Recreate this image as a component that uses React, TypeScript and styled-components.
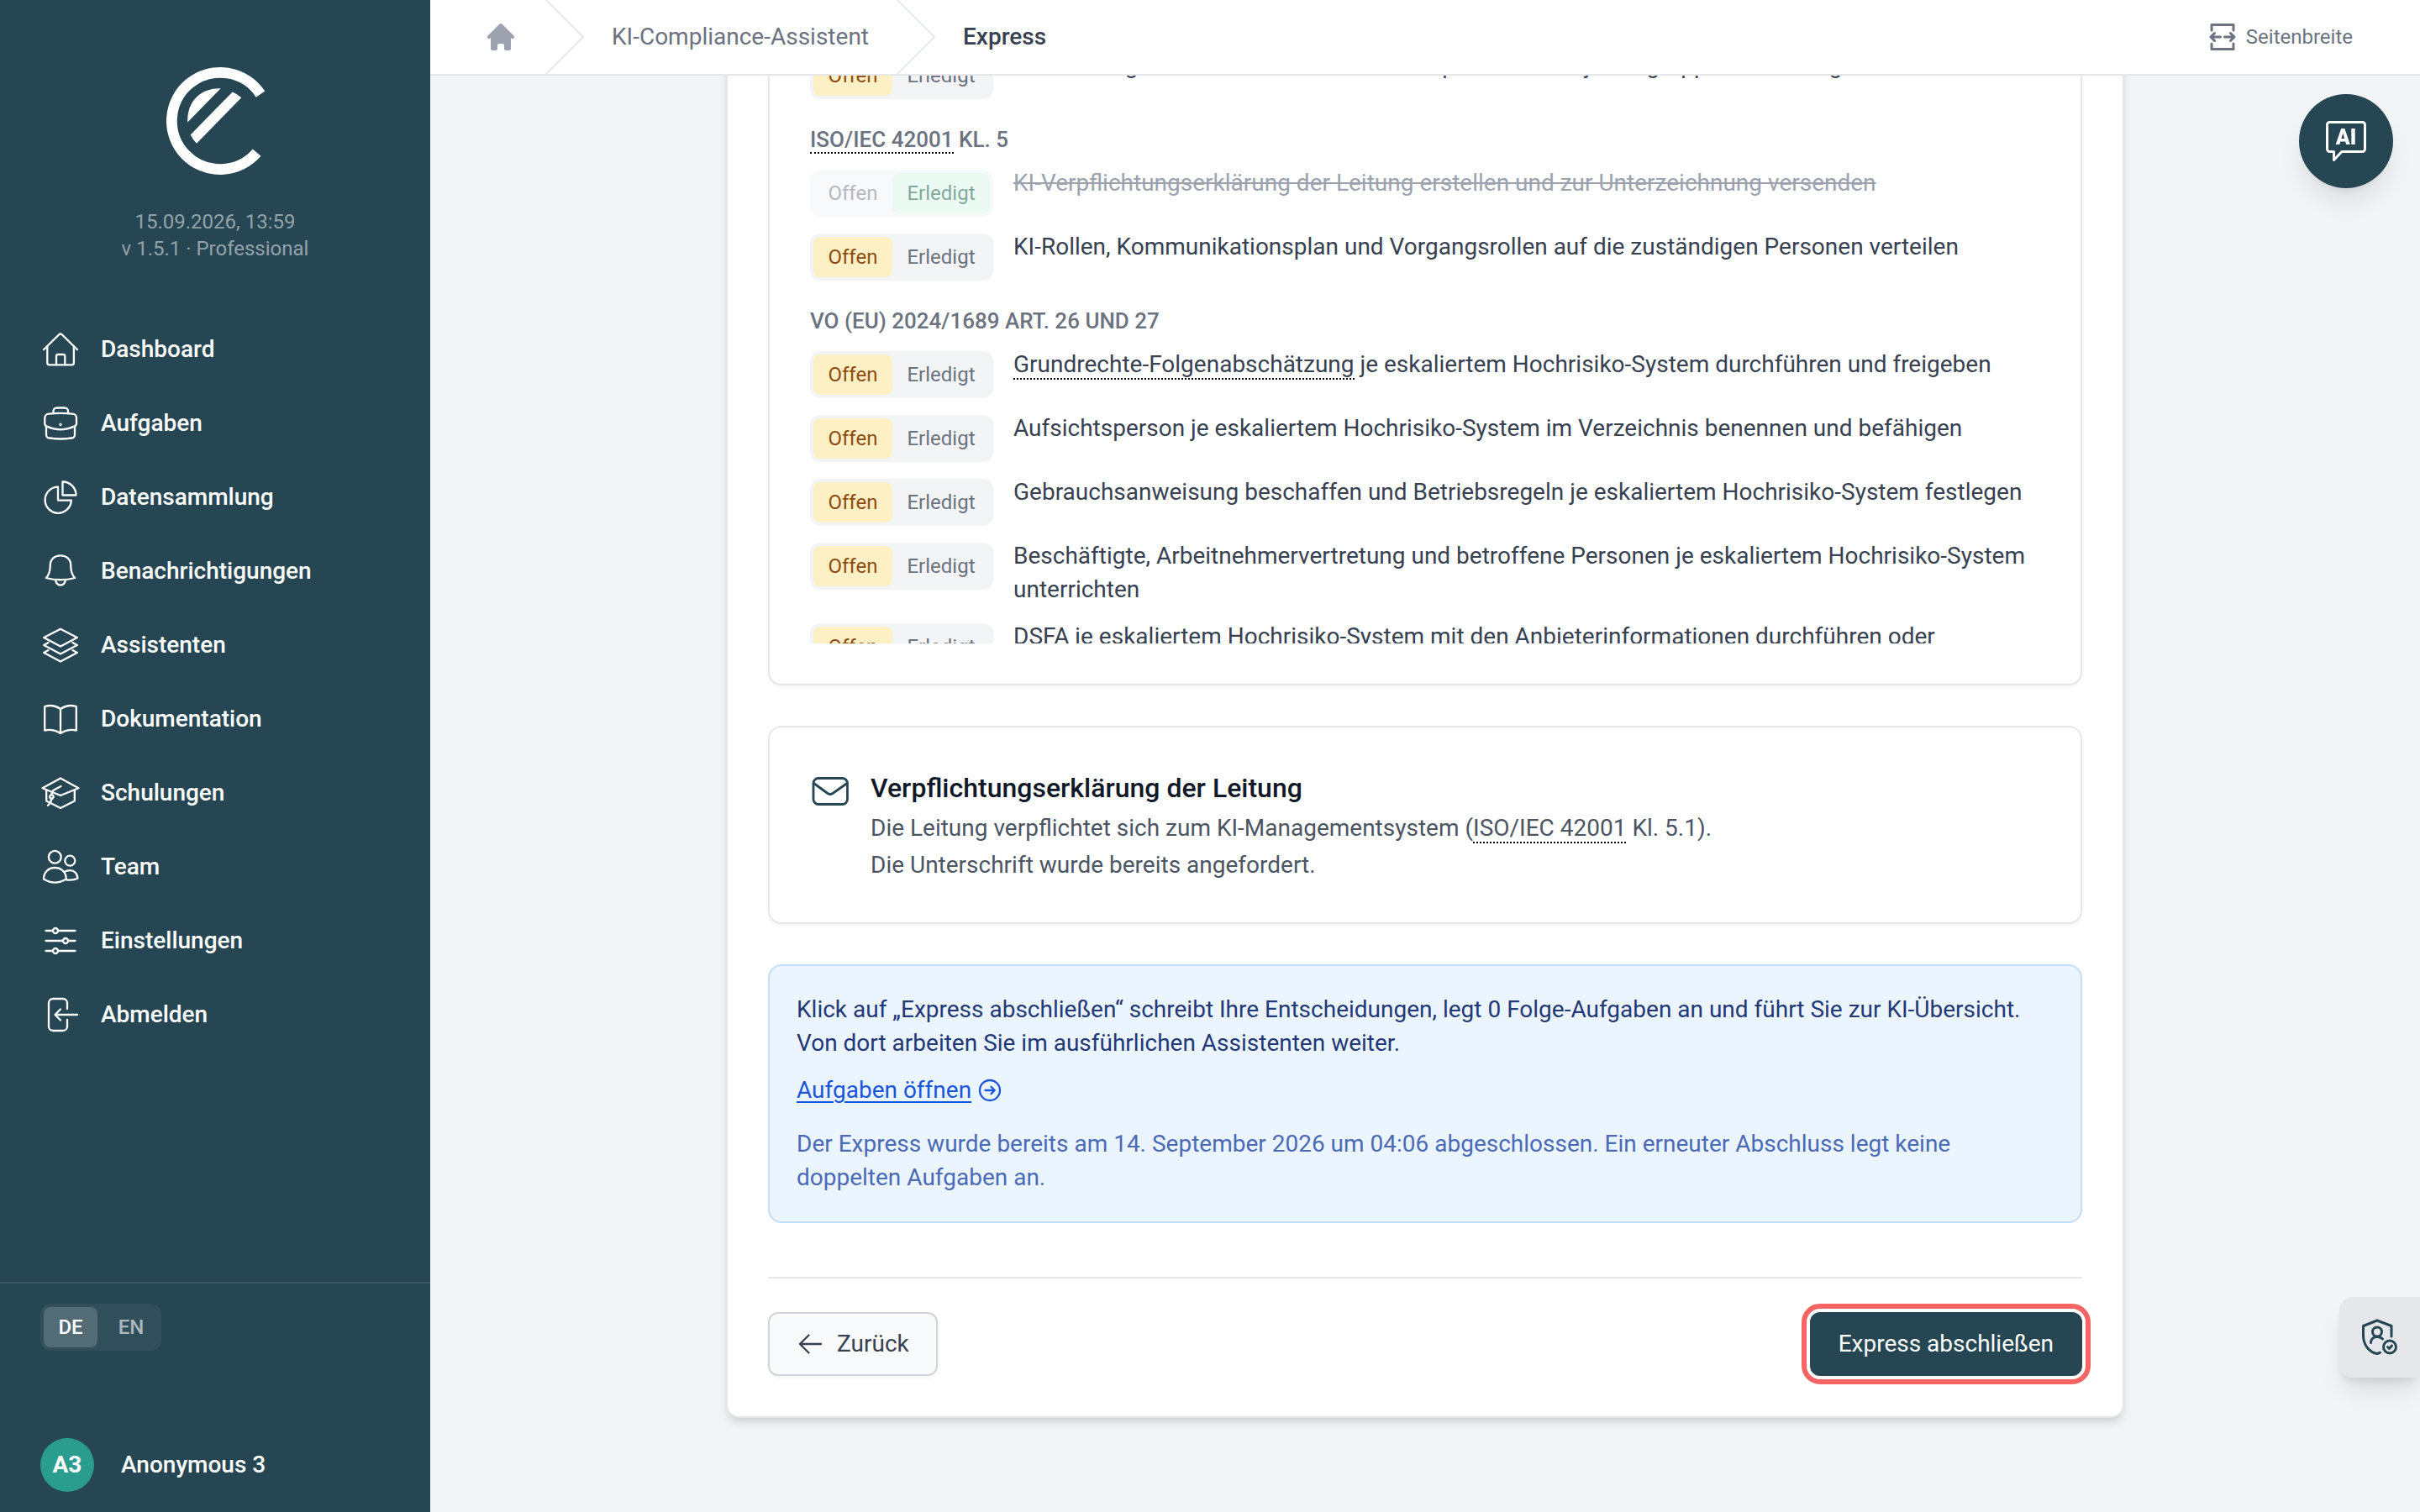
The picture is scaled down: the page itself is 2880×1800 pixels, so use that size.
import React from "react";
import styled, { createGlobalStyle, css } from "styled-components";

const color = {
  brand: "#264653",
  accent: "#2a9d8f",
  page: "#f3f4f6",
  line: "#e5e7eb",
  muted: "#6b7280",
  text: "#374151",
};

const GlobalStyle = createGlobalStyle`
  *, *::before, *::after { box-sizing: border-box; }
  body {
    margin: 0;
    font-family: Roboto, "Noto Sans", sans-serif;
    font-size: 28px;
    line-height: 40px;
    color: ${color.text};
    background: ${color.page};
  }
  h1, h2, h3, p, ul { margin: 0; padding: 0; }
  ul { list-style: none; }
  button { font: inherit; color: inherit; cursor: pointer; border: 0; background: none; padding: 0; }
  a { color: inherit; text-decoration: none; }
  svg { display: block; flex: none; }
`;

const Shell = styled.div`
  display: grid;
  grid-template-columns: 512px minmax(0, 1fr);
  height: 100vh;
  overflow: hidden;
`;

/* ---------- Sidebar ---------- */

const Sidebar = styled.aside`
  display: flex;
  flex-direction: column;
  background: ${color.brand};
  color: #fff;
`;

const Brand = styled.div`
  display: flex;
  flex-direction: column;
  align-items: center;
  padding: 72px 0 60px;
  gap: 32px;
`;

const Meta = styled.p`
  font-size: 24px;
  line-height: 32px;
  text-align: center;
  color: rgba(255, 255, 255, 0.5);
`;

const NavList = styled.ul`
  display: flex;
  flex-direction: column;
`;

const NavLink = styled.a`
  display: flex;
  align-items: center;
  gap: 24px;
  height: 88px;
  padding: 0 48px;
  font-weight: 500;
`;

const SidebarFooter = styled.div`
  display: flex;
  flex-direction: column;
  gap: 104px;
  align-items: flex-start;
  margin-top: auto;
  padding: 24px 48px;
  border-top: 2px solid rgba(255, 255, 255, 0.1);
`;

const Languages = styled.div`
  display: flex;
  padding: 4px;
  gap: 8px;
  border-radius: 12px;
  background: rgba(255, 255, 255, 0.05);
`;

const LanguageButton = styled.button<{ $active?: boolean }>`
  min-width: 64px;
  height: 48px;
  padding: 0 16px;
  border-radius: 8px;
  font-size: 24px;
  font-weight: 500;
  line-height: 32px;
  color: ${(p) => (p.$active ? "#fff" : "rgba(255, 255, 255, 0.6)")};
  background: ${(p) => (p.$active ? "rgba(255, 255, 255, 0.16)" : "transparent")};
`;

const Profile = styled.a`
  display: flex;
  align-items: center;
  gap: 32px;
  font-weight: 500;
`;

const Avatar = styled.span`
  display: grid;
  place-items: center;
  width: 64px;
  height: 64px;
  border-radius: 50%;
  background: ${color.accent};
  font-weight: 700;
`;

/* ---------- Header ---------- */

const Column = styled.div`
  display: flex;
  flex-direction: column;
  min-width: 0;
  min-height: 0;
`;

const Header = styled.header`
  display: flex;
  justify-content: space-between;
  align-items: center;
  height: 90px;
  flex: none;
  padding: 0 80px 0 64px;
  background: #fff;
  border-bottom: 2px solid ${color.line};
`;

const Crumbs = styled.nav`
  display: flex;
  align-items: center;
  gap: 32px;
  color: ${color.muted};
`;

const Current = styled.span`
  font-weight: 500;
  color: ${color.text};
`;

const WidthButton = styled.button`
  display: flex;
  align-items: center;
  gap: 8px;
  font-size: 24px;
  line-height: 32px;
  color: ${color.muted};
`;

/* ---------- Content ---------- */

const Viewport = styled.main`
  display: flex;
  flex-direction: column;
  justify-content: flex-end;
  align-items: center;
  flex: 1;
  min-height: 0;
  overflow: hidden;
  padding: 0 48px 112px;
`;

const Sheet = styled.div`
  display: flex;
  flex-direction: column;
  flex: none;
  gap: 48px;
  width: 100%;
  max-width: 1664px;
  padding: 48px;
  background: #fff;
  border: 2px solid ${color.line};
  border-radius: 16px;
  box-shadow: 0 8px 12px -2px rgba(0, 0, 0, 0.1), 0 4px 8px -4px rgba(0, 0, 0, 0.1);
`;

const Card = styled.section`
  padding: 48px;
  background: #fff;
  border: 2px solid ${color.line};
  border-radius: 16px;
  box-shadow: 0 2px 4px rgba(0, 0, 0, 0.05);
`;

const TaskScroller = styled.div`
  display: flex;
  flex-direction: column;
  gap: 32px;
  max-height: 708px;
  overflow: hidden;
`;

const TaskGroup = styled.section`
  display: flex;
  flex-direction: column;
  gap: 16px;
`;

const GroupTitle = styled.h3`
  font-size: 26px;
  line-height: 32px;
  font-weight: 500;
  color: ${color.muted};
`;

const Term = styled.abbr`
  text-decoration: none;
  border-bottom: 2px dotted #000;
`;

const TaskRows = styled.ul`
  display: flex;
  flex-direction: column;
  gap: 16px;
`;

const TaskRow = styled.li`
  display: flex;
  align-items: flex-start;
  gap: 24px;
`;

const StateToggle = styled.div<{ $faded?: boolean }>`
  display: flex;
  flex: none;
  width: 218px;
  margin-top: 4px;
  padding: 4px;
  border-radius: 12px;
  background: ${color.page};
  opacity: ${(p) => (p.$faded ? 0.5 : 1)};
`;

const StateButton = styled.button<{ $tone?: "open" | "done" }>`
  flex: auto;
  height: 48px;
  padding: 0 12px;
  border-radius: 8px;
  font-size: 24px;
  line-height: 32px;
  color: ${color.muted};
  ${(p) => p.$tone === "open" && css`background: #fdf0c4; color: #8e4b10;`}
  ${(p) => p.$tone === "done" && css`background: #d8f6e8; color: #03543f;`}
`;

const TaskText = styled.p<{ $done?: boolean }>`
  flex: 1;
  min-width: 0;
  ${(p) => p.$done && css`color: #9ca3af; text-decoration: line-through;`}
`;

const Notice = styled.div`
  display: flex;
  align-items: flex-start;
  gap: 24px;
`;

const NoticeIcon = styled.div`
  padding-top: 4px;
  color: ${color.brand};
`;

const NoticeBody = styled.div`
  display: flex;
  flex-direction: column;
  gap: 4px;
  color: #4b5563;
`;

const NoticeTitle = styled.h2`
  font-size: 32px;
  line-height: 48px;
  font-weight: 500;
  color: #111827;
`;

const Info = styled.section`
  display: flex;
  flex-direction: column;
  align-items: flex-start;
  gap: 16px;
  padding: 32px;
  border: 2px solid #c3ddfd;
  border-radius: 16px;
  background: #ebf5ff;
  color: #233876;
`;

const InfoLink = styled.a`
  display: inline-flex;
  align-items: center;
  gap: 8px;
  color: #1a56db;
`;

const Underlined = styled.span`
  text-decoration: underline;
  text-decoration-thickness: 2px;
  text-underline-offset: 4px;
`;

const InfoNote = styled.p`
  padding-top: 8px;
  color: #4b6ab6;
`;

const Actions = styled.footer`
  display: flex;
  justify-content: space-between;
  margin-top: 16px;
  padding-top: 40px;
  border-top: 2px solid ${color.line};
`;

const ActionButton = styled.button<{ $primary?: boolean }>`
  display: flex;
  align-items: center;
  gap: 16px;
  height: 76px;
  padding: 0 32px;
  border: 2px solid #d1d5db;
  border-radius: 12px;
  background: #f9fafb;
  box-shadow: 0 2px 4px rgba(0, 0, 0, 0.05);
  ${(p) =>
    p.$primary &&
    css`
      border-color: ${color.brand};
      background: ${color.brand};
      color: #fff;
      outline: 6px solid #f76464;
      outline-offset: 4px;
    `}
`;

/* ---------- Floating controls ---------- */

const ChatButton = styled.button`
  position: fixed;
  top: 112px;
  right: 32px;
  display: grid;
  place-items: center;
  width: 112px;
  height: 112px;
  border-radius: 50%;
  background: ${color.brand};
  color: #fff;
  box-shadow: 0 20px 30px -6px rgba(0, 0, 0, 0.1), 0 8px 12px -8px rgba(0, 0, 0, 0.1);
`;

const PrivacyButton = styled.button`
  position: fixed;
  right: 0;
  bottom: 160px;
  width: 96px;
  height: 96px;
  padding: 24px;
  border-radius: 16px 0 0 16px;
  background: ${color.line};
  color: ${color.brand};
  box-shadow: 0 20px 30px -6px rgba(0, 0, 0, 0.1), 0 8px 12px -4px rgba(0, 0, 0, 0.1);
`;

/* ---------- Drawings ---------- */

type IconProps = { size?: number; box?: number; stroke?: number; children: React.ReactNode };

const Icon = ({ size = 48, box = size, stroke = 2.3, children }: IconProps) => (
  <svg
    width={size}
    height={size}
    viewBox={`0 0 ${box} ${box}`}
    fill="none"
    stroke="currentColor"
    strokeWidth={stroke}
    strokeLinecap="round"
    strokeLinejoin="round"
    aria-hidden="true"
  >
    {children}
  </svg>
);

const Logo = () => (
  <svg width="144" height="144" viewBox="184 72 144 144" fill="#fff" role="img" aria-label="Logo">
    <path
      d="M310 112.100A57.600 57.600 0 1 0 305.600 181.600"
      fill="none"
      stroke="#fff"
      strokeWidth="12.8"
    />
    <path d="M262.700 105.200C239 104.500 222 121 223.300 145.400Z" />
    <path d="M276.700 109.500Q282.500 112 287.300 116.300L234 170.700Q229.500 166 226.700 160.400Z" />
  </svg>
);

const Chevron = () => (
  <svg width="48" height="88" viewBox="0 0 24 44" fill={color.line} aria-hidden="true">
    <path d="M.293 0l22 22-22 22h1.414l22-22-22-22H.293z" />
  </svg>
);

const HomeSolid = () => (
  <svg width="40" height="40" viewBox="0 0 20 20" fill="#9ca3af" role="img" aria-label="Startseite">
    <path d="M10.707 2.293a1 1 0 00-1.414 0l-7 7a1 1 0 001.414 1.414L4 10.414V17a1 1 0 001 1h2a1 1 0 001-1v-2a1 1 0 011-1h2a1 1 0 011 1v2a1 1 0 001 1h2a1 1 0 001-1v-6.586l.293.293a1 1 0 001.414-1.414l-7-7z" />
  </svg>
);

const navItems: { label: string; art: React.ReactNode }[] = [
  {
    label: "Dashboard",
    art: (
      <>
        <path d="M4 24.200L22.300 6.200a2.400 2.400 0 0 1 3.400 0L44 24.200" />
        <path d="M8.300 20.500V40a2.300 2.300 0 0 0 2.300 2.300h27a2.300 2.300 0 0 0 2.300-2.300V20.500" />
        <path d="M19 42V32a2 2 0 0 1 2-2h6.300a2 2 0 0 1 2 2v10" />
      </>
    ),
  },
  {
    label: "Aufgaben",
    art: (
      <>
        <path d="M15.500 12V9.500a4 4 0 0 1 4-4H29a4 4 0 0 1 4 4V12" />
        <path d="M10 12.600Q24 11 38 12.600a5 5 0 0 1 5 5V24a3.500 3.500 0 0 1-2.700 3.600Q24 35 7.700 27.600A3.500 3.500 0 0 1 5.300 24v-6.400a5 5 0 0 1 4.700-5Z" />
        <path d="M7 28v9.500a4 4 0 0 0 4 4Q24 43.500 37 41.500a4 4 0 0 0 4-4V28" />
        <circle cx="24" cy="25.500" r="0.600" />
      </>
    ),
  },
  {
    label: "Datensammlung",
    art: (
      <>
        <path d="M21 11.600A15.600 15.600 0 1 0 36.800 27.600H21Z" />
        <path d="M26.500 5.500V21.500H42.500A16 16 0 0 0 26.500 5.500Z" />
      </>
    ),
  },
  {
    label: "Benachrichtigungen",
    art: (
      <>
        <path d="M24 5.300c-7.500 0-12.200 5-12.200 11.500 0 8-1.500 12-5 15.200Q24 36.500 41.200 32c-3.500-3.200-5-7.200-5-15.200C36.200 10.300 31.500 5.300 24 5.300Z" />
        <path d="M18 34.600a6.200 8 0 0 0 12 0" />
      </>
    ),
  },
  {
    label: "Assistenten",
    art: (
      <>
        <path d="M24 4.800L43.800 15 24 25.500 4.200 15Z" />
        <path d="M9.500 21L4.200 24 24 34.500 43.800 24l-5.300-3" />
        <path d="M9.500 30L4.200 33 24 43.500 43.800 33l-5.300-3" />
      </>
    ),
  },
  {
    label: "Dokumentation",
    art: (
      <path d="M24 12v29Q15 35.500 5.200 37.500V9Q15 6 24 12Q33 6 42.800 9v28.500Q33 35.500 24 41" />
    ),
  },
  {
    label: "Schulungen",
    art: (
      <>
        <path d="M24 6.500L45.500 18.300 24 27 2.500 18.300Z" />
        <path d="M7.200 21v12.500L24 42l16.800-8.500V21" />
        <path d="M24.500 16L16 20.500q-2.600 1.700-2.600 5.500" />
        <circle cx="13.400" cy="28.500" r="2.200" />
        <path d="M13.400 31Q12.500 36 9 38.800" />
      </>
    ),
  },
  {
    label: "Team",
    art: (
      <>
        <circle cx="17.300" cy="12.300" r="7.400" />
        <circle cx="35.300" cy="16.700" r="6" />
        <path d="M4 38.500C4 30.500 9.500 25 17.300 25s13.500 5.500 13.500 13.500Q24 42.600 17.300 42.600T4 38.500Z" />
        <path d="M28.500 30Q31 28.200 35.300 28.200c5 0 9 3.600 9 9.600q-5.500 2.500-13.300 1.500" />
      </>
    ),
  },
  {
    label: "Einstellungen",
    art: (
      <>
        <path d="M6.500 12h8.500M21 12h20.500M6.500 24H27M33 24h8.500M6.500 36H15M21 36h20.500" />
        <circle cx="18" cy="12" r="3" />
        <circle cx="30" cy="24" r="3" />
        <circle cx="18" cy="36" r="3" />
      </>
    ),
  },
  {
    label: "Abmelden",
    art: (
      <>
        <path d="M32 17V10a5 5 0 0 0-5-5H15a5 5 0 0 0-5 5v28a5 5 0 0 0 5 5h12a5 5 0 0 0 5-5v-8" />
        <path d="M44 24H18M24 17.500L17.500 24l6.500 6.500" />
      </>
    ),
  },
];

/* ---------- Tasks ---------- */

type Task = { id: string; text: React.ReactNode; done?: boolean };
type Group = { id: string; title?: React.ReactNode; tasks: Task[] };

const groups: Group[] = [
  {
    id: "kompetenz",
    tasks: [
      { id: "schulung", text: "KI-Schulung nach Rollen und Art der Kompetenzstufen je Zielgruppe und festlegen" },
    ],
  },
  {
    id: "iso",
    title: (
      <>
        <Term>ISO/IEC 42001</Term> KL. 5
      </>
    ),
    tasks: [
      {
        id: "verpflichtung",
        done: true,
        text: "KI-Verpflichtungserklärung der Leitung erstellen und zur Unterzeichnung versenden",
      },
      {
        id: "rollen",
        text: "KI-Rollen, Kommunikationsplan und Vorgangsrollen auf die zuständigen Personen verteilen",
      },
    ],
  },
  {
    id: "vo",
    title: "VO (EU) 2024/1689 ART. 26 UND 27",
    tasks: [
      {
        id: "gfa",
        text: (
          <>
            <Term>Grundrechte-Folgenabschätzung</Term> je eskaliertem Hochrisiko-System durchführen und freigeben
          </>
        ),
      },
      {
        id: "aufsicht",
        text: "Aufsichtsperson je eskaliertem Hochrisiko-System im Verzeichnis benennen und befähigen",
      },
      {
        id: "anweisung",
        text: "Gebrauchsanweisung beschaffen und Betriebsregeln je eskaliertem Hochrisiko-System festlegen",
      },
      {
        id: "unterrichten",
        text: "Beschäftigte, Arbeitnehmervertretung und betroffene Personen je eskaliertem Hochrisiko-System unterrichten",
      },
      {
        id: "dsfa",
        text: "DSFA je eskaliertem Hochrisiko-System mit den Anbieterinformationen durchführen oder aktualisieren",
      },
    ],
  },
];

const TaskItem = ({ task }: { task: Task }) => (
  <TaskRow>
    <StateToggle role="group" aria-label="Status" $faded={task.done}>
      <StateButton type="button" aria-pressed={!task.done} $tone={task.done ? undefined : "open"}>
        Offen
      </StateButton>
      <StateButton type="button" aria-pressed={!!task.done} $tone={task.done ? "done" : undefined}>
        Erledigt
      </StateButton>
    </StateToggle>
    <TaskText $done={task.done}>{task.text}</TaskText>
  </TaskRow>
);

export default function App() {
  return (
    <>
      <GlobalStyle />
      <Shell>
        <Sidebar>
          <Brand>
            <Logo />
            <Meta>
              15.09.2026, 13:59
              <br />v 1.5.1 · Professional
            </Meta>
          </Brand>
          <nav aria-label="Hauptnavigation">
            <NavList>
              {navItems.map((item) => (
                <li key={item.label}>
                  <NavLink href="#">
                    <Icon>{item.art}</Icon>
                    {item.label}
                  </NavLink>
                </li>
              ))}
            </NavList>
          </nav>
          <SidebarFooter>
            <Languages role="group" aria-label="Sprache">
              <LanguageButton type="button" aria-pressed="true" $active>
                DE
              </LanguageButton>
              <LanguageButton type="button" aria-pressed="false">
                EN
              </LanguageButton>
            </Languages>
            <Profile href="#">
              <Avatar>A3</Avatar>
              Anonymous 3
            </Profile>
          </SidebarFooter>
        </Sidebar>

        <Column>
          <Header>
            <Crumbs aria-label="Brotkrumen">
              <a href="#">
                <HomeSolid />
              </a>
              <Chevron />
              <a href="#">KI-Compliance-Assistent</a>
              <Chevron />
              <Current aria-current="page">Express</Current>
            </Crumbs>
            <WidthButton type="button">
              <Icon size={40} stroke={3}>
                <path d="M7 12V5.500h26V12M7 28v6.500h26V28" />
                <path d="M17.500 20H6M10.500 15.500L6 20l4.500 4.500M22.500 20H34M29.500 15.500L34 20l-4.500 4.500" />
              </Icon>
              Seitenbreite
            </WidthButton>
          </Header>

          <Viewport>
            <Sheet>
              <Card>
                <TaskScroller>
                  {groups.map((group) => (
                    <TaskGroup key={group.id}>
                      {group.title && <GroupTitle>{group.title}</GroupTitle>}
                      <TaskRows>
                        {group.tasks.map((task) => (
                          <TaskItem key={task.id} task={task} />
                        ))}
                      </TaskRows>
                    </TaskGroup>
                  ))}
                </TaskScroller>
              </Card>

              <Card>
                <Notice>
                  <NoticeIcon>
                    <Icon stroke={2.8}>
                      <rect x="4" y="8.500" width="40.500" height="31" rx="6" />
                      <path d="M4.500 14.500L21 26.500q3 2 6 0L44 14.500" />
                    </Icon>
                  </NoticeIcon>
                  <NoticeBody>
                    <NoticeTitle>Verpflichtungserklärung der Leitung</NoticeTitle>
                    <p>
                      Die Leitung verpflichtet sich zum KI-Managementsystem (<Term>ISO/IEC 42001</Term> Kl. 5.1).
                    </p>
                    <p>Die Unterschrift wurde bereits angefordert.</p>
                  </NoticeBody>
                </Notice>
              </Card>

              <Info>
                <p>
                  Klick auf „Express abschließen“ schreibt Ihre Entscheidungen, legt 0 Folge-Aufgaben an und führt Sie
                  zur KI-Übersicht. Von dort arbeiten Sie im ausführlichen Assistenten weiter.
                </p>
                <InfoLink href="#">
                  <Underlined>Aufgaben öffnen</Underlined>
                  <Icon size={28} stroke={2.3}>
                    <circle cx="14" cy="14" r="12" />
                    <path d="M8.500 14h11M15.500 9.800L19.700 14l-4.200 4.200" />
                  </Icon>
                </InfoLink>
                <InfoNote>
                  Der Express wurde bereits am 14. September 2026 um 04:06 abgeschlossen. Ein erneuter Abschluss legt
                  keine doppelten Aufgaben an.
                </InfoNote>
              </Info>

              <Actions>
                <ActionButton type="button">
                  <Icon size={32} stroke={2.3}>
                    <path d="M29 16H4M14.500 5.500L4 16l10.500 10.500" />
                  </Icon>
                  Zurück
                </ActionButton>
                <ActionButton type="button" $primary>
                  Express abschließen
                </ActionButton>
              </Actions>
            </Sheet>
          </Viewport>
        </Column>
      </Shell>

      <ChatButton type="button" aria-label="KI-Chat öffnen">
        <Icon stroke={3}>
          <path d="M4.500 1.500h39a3 3 0 0 1 3 3v29a3 3 0 0 1-3 3H19L9.500 46.500V36.500h-5a3 3 0 0 1-3-3v-29a3 3 0 0 1 3-3Z" />
          <text x="24" y="28" textAnchor="middle" fontSize="25" fontWeight="900" fill="currentColor" stroke="none">
            AI
          </text>
        </Icon>
      </ChatButton>
      <PrivacyButton type="button" aria-label="Datenschutz">
        <Icon stroke={3}>
          <path d="M38 23V10.500L21 4 4.500 10.500V22c0 12 8 20 16.500 21.500q1.500-.3 3.500-1.300" />
          <circle cx="21" cy="17.500" r="5.500" />
          <path d="M13.500 30.500c0-4.500 3-7 7.500-7q4 0 6.500 2.500" />
          <circle cx="36" cy="35.500" r="7.500" />
          <path d="M33.500 35.500l2 2 3-3.500" />
        </Icon>
      </PrivacyButton>
    </>
  );
}
